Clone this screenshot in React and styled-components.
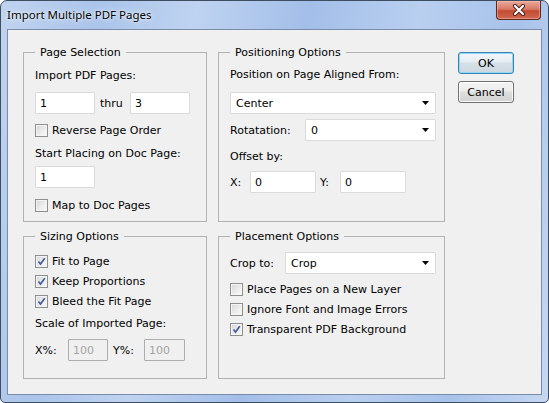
import React from "react";
import styled, { createGlobalStyle } from "styled-components";

const GlobalStyle = createGlobalStyle`
  html, body {
    margin: 0;
    padding: 0;
    background: #ffffff;
  }
  body {
    font-family: "DejaVu Sans", Tahoma, sans-serif;
    font-size: 11px;
    color: #000;
  }
  * {
    box-sizing: border-box;
  }
`;

const Window = styled.div`
  width: 549px;
  height: 403px;
  border: 1px solid #3f4d60;
  border-radius: 7px 7px 5px 5px;
  background: linear-gradient(
    100deg,
    #c0d4ef 0%,
    #aac4ea 16%,
    #bed3f0 32%,
    #a3bee8 50%,
    #b8cfef 68%,
    #a8c2ea 84%,
    #c5d8f2 100%
  );
  display: flex;
  flex-direction: column;
  overflow: hidden;
`;

const TitleBar = styled.div`
  height: 28px;
  display: flex;
  justify-content: space-between;
  align-items: flex-start;
  padding-left: 6px;
`;

const Title = styled.span`
  font-family: "Noto Sans", "Open Sans", sans-serif;
  font-size: 11.5px;
  line-height: 16px;
  padding-top: 6px;
  color: #000;
  text-shadow: 0 0 6px rgba(255, 255, 255, 0.9), 0 0 2px rgba(255, 255, 255, 0.9);
`;

const CloseButton = styled.div`
  width: 45px;
  height: 19px;
  margin-right: 7px;
  border: 1px solid #5b2a22;
  border-top: none;
  border-radius: 0 0 4px 4px;
  background: linear-gradient(#e9a99b 0%, #d97a66 45%, #c44a33 55%, #cf6a4f 100%);
  box-shadow: inset 0 0 0 1px rgba(255, 200, 190, 0.45);
  display: flex;
  align-items: center;
  justify-content: center;
`;

const Client = styled.div`
  margin: 0 6px;
  height: 366px;
  border: 1px solid #7c8ca6;
  background: #f0f0f0;
  padding: 22px 0 0 15px;
  display: grid;
  grid-template-columns: 184px 227px 56px;
  grid-template-rows: 170px 143px;
  column-gap: 11px;
  row-gap: 14px;
  align-content: start;
`;

const Group = styled.div`
  position: relative;
  border: 1px solid #b2b2b2;
  padding: ${(p) => p.$pt}px 8px 0 11px;
  display: flex;
  flex-direction: column;
  align-items: flex-start;
`;

const Legend = styled.span`
  position: absolute;
  top: -7px;
  left: 11px;
  padding: 0 5px;
  line-height: 13px;
  background: #f0f0f0;
  white-space: nowrap;
`;

const Label = styled.div`
  line-height: 13px;
  white-space: nowrap;
  margin-top: ${(p) => p.$mt || 0}px;
`;

const Row = styled.div`
  display: flex;
  align-items: center;
  margin-top: ${(p) => p.$mt || 0}px;
`;

const FieldLabel = styled.span`
  width: ${(p) => p.$w}px;
  margin-left: ${(p) => p.$ml || 0}px;
  white-space: nowrap;
`;

const TextBox = styled.input`
  width: ${(p) => p.$w}px;
  height: 22px;
  margin: 0;
  padding: 0 4px;
  border: 1px solid #dadada;
  border-radius: 1px;
  background: #fff;
  font: inherit;
  color: #000;
  outline: none;

  &:disabled {
    border-color: #adadad;
    background: #f0f0f0;
    color: #a3a3a3;
  }
`;

const Select = styled.div`
  width: ${(p) => p.$w}px;
  height: 22px;
  display: flex;
  align-items: center;
  justify-content: space-between;
  padding: 0 6px 0 5px;
  border: 1px solid #dadada;
  border-radius: 1px;
  background: #fff;
`;

const CheckRow = styled.label`
  display: flex;
  align-items: center;
  gap: 4px;
  height: 13px;
  line-height: 13px;
  white-space: nowrap;
  margin-top: ${(p) => p.$mt || 0}px;
`;

const Box = styled.span`
  width: 13px;
  height: 13px;
  border: 1px solid #8e8f8f;
  background: linear-gradient(135deg, #d4d6d9 0%, #eeeeee 60%, #fafafa 100%);
  box-shadow: inset 0 0 0 1px #f4f4f4;
  display: flex;
  align-items: center;
  justify-content: center;
`;

const ButtonColumn = styled.div`
  grid-row: 1;
  grid-column: 3;
  margin-left: 2px;
  display: flex;
  flex-direction: column;
  gap: 7px;
`;

const Button = styled.button`
  width: 56px;
  height: 22px;
  padding: 0;
  border: 1px solid ${(p) => (p.$primary ? "#3c7fb1" : "#707070")};
  border-radius: 3px;
  background: ${(p) =>
    p.$primary
      ? "linear-gradient(#f1f6f9 0%, #e6edf2 45%, #d6e0e7 50%, #ccd7df 100%)"
      : "linear-gradient(#f4f4f4 0%, #ececec 45%, #dedede 50%, #d2d2d2 100%)"};
  box-shadow: inset 0 0 0 1px ${(p) => (p.$primary ? "#8fdaf7" : "rgba(255,255,255,0.85)")};
  font: inherit;
  color: #000;
`;

const Arrow = () => (
  <svg width="7" height="4" viewBox="0 0 7 4">
    <path d="M0 0 H7 L3.5 4 Z" fill="#000" />
  </svg>
);

const Check = ({ checked, children, mt }) => (
  <CheckRow $mt={mt}>
    <Box>
      {checked && (
        <svg width="9" height="9" viewBox="0 0 9 9">
          <path d="M1.5 4.5 L3.5 7 L7.8 1.2" fill="none" stroke="#4a5e9c" strokeWidth="1.7" />
        </svg>
      )}
    </Box>
    {children}
  </CheckRow>
);

export default function App() {
  return (
    <>
      <GlobalStyle />
      <Window>
        <TitleBar>
          <Title>Import Multiple PDF Pages</Title>
          <CloseButton>
            <svg width="14" height="12" viewBox="0 0 14 12">
              <path d="M3 2 L11 10 M11 2 L3 10" stroke="#4a1d16" strokeWidth="4" strokeLinecap="round" />
              <path d="M3 2 L11 10 M11 2 L3 10" stroke="#fff" strokeWidth="2.2" strokeLinecap="round" />
            </svg>
          </CloseButton>
        </TitleBar>

        <Client>
          <Group $pt={16}>
            <Legend>Page Selection</Legend>
            <Label>Import PDF Pages:</Label>
            <Row $mt={10}>
              <TextBox $w={60} defaultValue="1" />
              <FieldLabel $w={30} $ml={5}>thru</FieldLabel>
              <TextBox $w={60} defaultValue="3" />
            </Row>
            <Check mt={10}>Reverse Page Order</Check>
            <Label $mt={10}>Start Placing on Doc Page:</Label>
            <Row $mt={6}>
              <TextBox $w={60} defaultValue="1" />
            </Row>
            <Check mt={11}>Map to Doc Pages</Check>
          </Group>

          <Group $pt={15}>
            <Legend>Positioning Options</Legend>
            <Label>Position on Page Aligned From:</Label>
            <Row $mt={11}>
              <Select $w={206}>
                <span>Center</span>
                <Arrow />
              </Select>
            </Row>
            <Row $mt={5}>
              <FieldLabel $w={75}>Rotatation:</FieldLabel>
              <Select $w={131}>
                <span>0</span>
                <Arrow />
              </Select>
            </Row>
            <Label $mt={9}>Offset by:</Label>
            <Row $mt={8}>
              <FieldLabel $w={20}>X:</FieldLabel>
              <TextBox $w={66} defaultValue="0" />
              <FieldLabel $w={20} $ml={4}>Y:</FieldLabel>
              <TextBox $w={66} defaultValue="0" />
            </Row>
          </Group>

          <ButtonColumn>
            <Button $primary>OK</Button>
            <Button>Cancel</Button>
          </ButtonColumn>

          <Group $pt={18}>
            <Legend>Sizing Options</Legend>
            <Check checked>Fit to Page</Check>
            <Check checked mt={7}>Keep Proportions</Check>
            <Check checked mt={7}>Bleed the Fit Page</Check>
            <Label $mt={9}>Scale of Imported Page:</Label>
            <Row $mt={9}>
              <FieldLabel $w={33}>X%:</FieldLabel>
              <TextBox $w={40} defaultValue="100" disabled />
              <FieldLabel $w={31} $ml={5}>Y%:</FieldLabel>
              <TextBox $w={41} defaultValue="100" disabled />
            </Row>
          </Group>

          <Group $pt={15}>
            <Legend>Placement Options</Legend>
            <Row>
              <FieldLabel $w={55}>Crop to:</FieldLabel>
              <Select $w={151}>
                <span>Crop</span>
                <Arrow />
              </Select>
            </Row>
            <Check mt={9}>Place Pages on a New Layer</Check>
            <Check mt={7}>Ignore Font and Image Errors</Check>
            <Check checked mt={7}>Transparent PDF Background</Check>
          </Group>
        </Client>
      </Window>
    </>
  );
}
